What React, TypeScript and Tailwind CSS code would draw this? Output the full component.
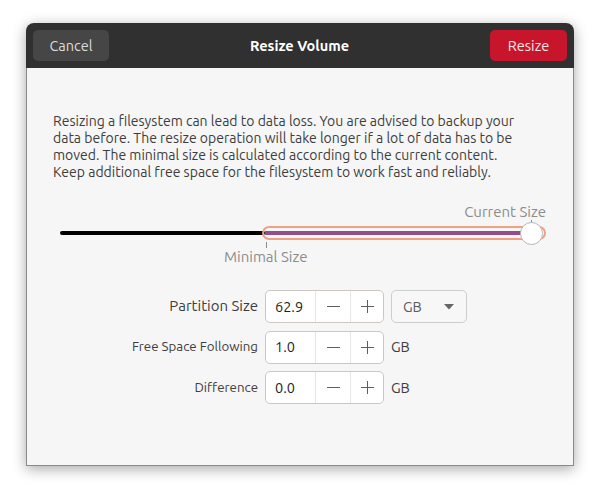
import React from "react";

const FONT = "font-['Ubuntu','Noto_Sans','Open_Sans',sans-serif]";

function Minus() {
  return (
    <svg width="13" height="13" viewBox="0 0 13 13"><path d="M0 6.5h13" stroke="#5e5e5e" strokeWidth="1" /></svg>
  );
}

function Plus() {
  return (
    <svg width="13" height="13" viewBox="0 0 13 13"><path d="M0 6.5h13M6.5 0v13" stroke="#5e5e5e" strokeWidth="1" /></svg>
  );
}

function SpinRow({ label, value, unit, big }: { label: string; value: string; unit: React.ReactNode; big?: boolean }) {
  return (
    <>
      <div className={`justify-self-end self-center text-[#3d3d3d] whitespace-nowrap ${big ? "text-[15px]" : "text-[13.3px]"}`}>{label}</div>
      <div className="flex h-[33px] w-[119px] rounded-[5px] border border-[#cdc7c2] bg-white overflow-hidden">
        <div className="flex items-center w-[49px] pl-[9px] text-[14.5px] text-[#1e1e1e]">{value}</div>
        <div className="flex items-center justify-center w-[35px] border-l border-[#e6e6e6]"><Minus /></div>
        <div className="flex items-center justify-center flex-1 border-l border-[#e6e6e6]"><Plus /></div>
      </div>
      {unit}
    </>
  );
}

export default function App() {
  return (
    <div className={`w-[600px] h-[495px] bg-white pt-[23px] pl-[26px] ${FONT}`}>
      <div className="w-[548px] h-[443px] flex flex-col rounded-t-[8px] shadow-[0_3px_14px_rgba(0,0,0,0.35)]">
        {/* Header bar */}
        <div className="h-[45px] shrink-0 bg-[#303030] rounded-t-[8px] flex items-center justify-between px-[7px]">
          <button className="h-[31px] w-[76px] rounded-[5px] bg-[#464646] text-[14.5px] text-[#dcdcdc]">Cancel</button>
          <div className="text-[14.5px] font-bold text-white">Resize Volume</div>
          <button className="h-[31px] w-[77px] rounded-[5px] bg-[#c7162b] text-[14.5px] text-[#f4e6e8]">Resize</button>
        </div>

        {/* Body */}
        <div className="flex-1 bg-[#f6f6f6] border-x border-b border-[#8a8a8a] flex flex-col">
          <p className="mt-[45px] ml-[26px] text-[14px] leading-[17px] text-[#3d3d3d] whitespace-nowrap">
            Resizing a filesystem can lead to data loss. You are advised to backup your
            <br />
            data before. The resize operation will take longer if a lot of data has to be
            <br />
            moved. The minimal size is calculated according to the current content.
            <br />
            Keep additional free space for the filesystem to work fast and reliably.
          </p>

          {/* Slider */}
          <div className="relative mt-[21px] ml-[33px] w-[486px] h-[62px]">
            <div className="absolute right-0 top-[1px] text-[15px] text-[#8c8c8c] leading-[17px]">Current Size</div>
            <div className="absolute left-[471px] top-[18px] w-px h-[5px] bg-[#8c8c8c]" />
            <div className="absolute left-0 top-[29px] w-[205px] h-[4px] rounded-full bg-black" />
            <div className="absolute left-[202px] top-[24px] w-[284px] h-[14px] rounded-full border-2 border-[#f1a086] flex items-center pl-[1px] pr-[8px]">
              <div className="h-[4px] w-full bg-[#924d8b]" />
            </div>
            <div className="absolute left-[460px] top-[20px] w-[23px] h-[23px] rounded-full bg-white border border-[#b8b8b8]" />
            <div className="absolute left-[206px] top-[40px] w-px h-[6px] bg-[#8c8c8c]" />
            <div className="absolute left-[164px] top-[46px] text-[15px] text-[#8c8c8c] leading-[17px]">Minimal Size</div>
          </div>

          {/* Form */}
          <div className="mt-[26px] grid grid-cols-[231px_auto_1fr] gap-x-[7px] gap-y-[7.5px] items-center">
            <SpinRow
              big
              label="Partition Size"
              value="62.9"
              unit={
                <div className="justify-self-start flex items-center justify-between h-[33px] w-[76px] rounded-[5px] border border-[#cdcdcd] bg-[#f7f7f7] pl-[11px] pr-[12px]">
                  <span className="text-[14.5px] text-[#5a5a5a]">GB</span>
                  <svg width="10" height="6" viewBox="0 0 10 6"><path d="M0 0h10L5 5.5z" fill="#666" /></svg>
                </div>
              }
            />
            <SpinRow label="Free Space Following" value="1.0" unit={<span className="text-[14.5px] text-[#3d3d3d]">GB</span>} />
            <SpinRow label="Difference" value="0.0" unit={<span className="text-[14.5px] text-[#3d3d3d]">GB</span>} />
          </div>
        </div>
      </div>
    </div>
  );
}
